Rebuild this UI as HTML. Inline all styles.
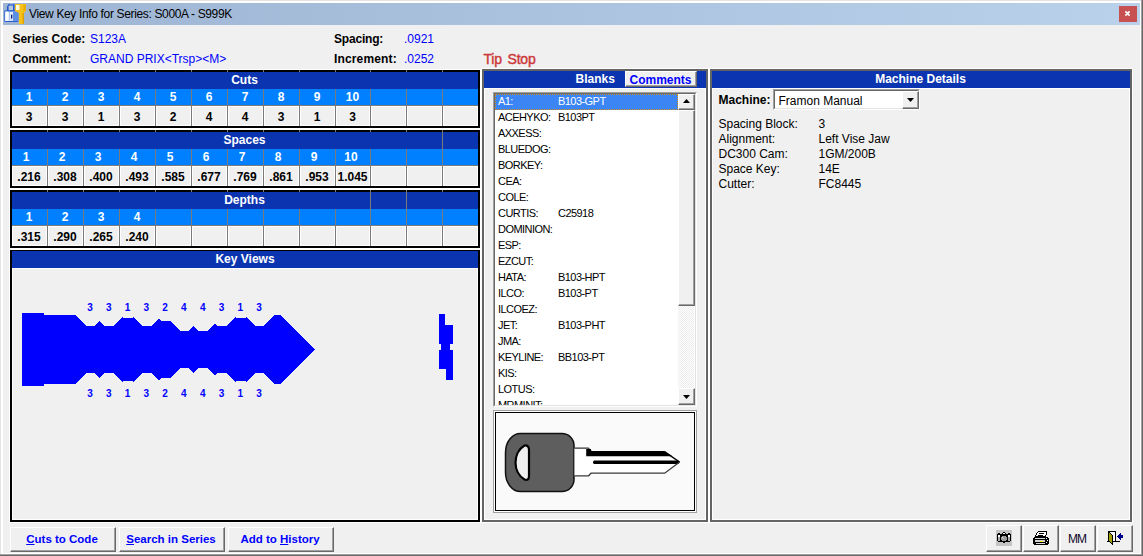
<!DOCTYPE html>
<html><head><meta charset="utf-8">
<style>
*{margin:0;padding:0;box-sizing:border-box}
html,body{width:1143px;height:556px;overflow:hidden;background:#f0f0f0;font-family:"Liberation Sans",sans-serif}
.a{position:absolute}
.t{position:absolute;line-height:1;white-space:nowrap}
.b{font-weight:bold}
.grid{position:absolute;left:10px;width:470px;height:58px;border:2px solid #000;box-shadow:0 0 0 1px #fff;background:#f0f0f0}
.vl{position:absolute;top:-2px;width:1px;height:56px;background:#7a7a7a}
.hd{position:absolute;left:0;top:0;width:466px;height:17px;background:#0b35b0}
.hr{position:absolute;left:0;top:17px;width:466px;height:16px;background:#0080ff}
.hl{position:absolute;left:0;top:33px;width:466px;height:1px;background:#7a7a7a}
.cw{position:absolute;height:20px;top:34px;box-shadow:inset 0 0 0 1px #fff}
.c{position:absolute;width:35px;text-align:center;font-weight:bold;font-size:12px;line-height:1;white-space:nowrap}
.panel{position:absolute;border:2px solid #646464}
.btn{position:absolute;background:#f0f0f0;border-top:1px solid #fff;border-left:1px solid #fff;border-right:1px solid #696969;border-bottom:1px solid #696969;box-shadow:inset -1px -1px 0 #a0a0a0}
</style></head><body>
<div class="a" style="left:0;top:0;width:1143px;height:1px;background:#e3e3e3"></div>
<div class="a" style="left:0;top:0;width:1px;height:556px;background:#e3e3e3"></div>
<div class="a" style="left:1px;top:1px;width:1140px;height:2px;background:#fff"></div>
<div class="a" style="left:1px;top:1px;width:2px;height:553px;background:#fff"></div>
<div class="a" style="left:1140px;top:1px;width:1px;height:553px;background:#fff"></div>
<div class="a" style="left:1px;top:553px;width:1140px;height:1px;background:#fff"></div>
<div class="a" style="left:1141px;top:0;width:1px;height:555px;background:#a0a0a0"></div>
<div class="a" style="left:0;top:554px;width:1142px;height:1px;background:#a0a0a0"></div>
<div class="a" style="left:1142px;top:0;width:1px;height:556px;background:#696969"></div>
<div class="a" style="left:0;top:555px;width:1143px;height:1px;background:#696969"></div>
<div class="a" style="left:3px;top:3px;width:1137px;height:22px;background:linear-gradient(to right,#9db5d3,#b9d1ea)"></div>
<div class="t" style="left:29px;top:7.84px;font-size:12px;color:#000;letter-spacing:-0.35px">View Key Info for Series: S000A - S999K</div>
<div class="a" style="left:1119px;top:6px;width:18px;height:16px;background:#c75050"></div>
<svg class="a" style="left:1119px;top:6px" width="18" height="16" viewBox="0 0 18 16"><path d="M6.4,5.4 L10.6,9.6 M10.6,5.4 L6.4,9.6" stroke="#fff" stroke-width="1.7" stroke-linecap="butt"/></svg>
<div class="t b" style="left:12.5px;top:32.84px;font-size:12px;color:#000;letter-spacing:-0.05px">Series Code:</div>
<div class="t" style="left:90px;top:32.84px;font-size:12px;color:#0000ff;">S123A</div>
<div class="t b" style="left:12.5px;top:52.84px;font-size:12px;color:#000;letter-spacing:-0.1px">Comment:</div>
<div class="t" style="left:90px;top:52.84px;font-size:12px;color:#0000ff;">GRAND PRIX&lt;Trsp&gt;&lt;M&gt;</div>
<div class="t b" style="left:334px;top:32.84px;font-size:12px;color:#000;letter-spacing:-0.2px">Spacing:</div>
<div class="t" style="left:404px;top:32.84px;font-size:12px;color:#0000ff;">.0921</div>
<div class="t b" style="left:334px;top:52.84px;font-size:12px;color:#000;letter-spacing:0.15px">Increment:</div>
<div class="t" style="left:404px;top:52.84px;font-size:12px;color:#0000ff;">.0252</div>
<div class="t" style="left:483.5px;top:52.15px;font-size:14px;color:#cc3838;-webkit-text-stroke:0.4px #cc3838;word-spacing:2px;letter-spacing:-0.2px">Tip Stop</div>
<div class="grid" style="top:70px">
<div class="hd"></div><div class="hr"></div><div class="hl"></div>
<div class="cw" style="left:0px;width:35px"></div>
<div class="cw" style="left:36px;width:35px"></div>
<div class="cw" style="left:72px;width:35px"></div>
<div class="cw" style="left:108px;width:35px"></div>
<div class="cw" style="left:144px;width:35px"></div>
<div class="cw" style="left:180px;width:35px"></div>
<div class="cw" style="left:216px;width:35px"></div>
<div class="cw" style="left:252px;width:35px"></div>
<div class="cw" style="left:288px;width:35px"></div>
<div class="cw" style="left:324px;width:34px"></div>
<div class="cw" style="left:359px;width:35px"></div>
<div class="cw" style="left:395px;width:35px"></div>
<div class="cw" style="left:431px;width:35px"></div>
<div class="vl" style="left:35px;top:17px;height:37px"></div>
<div class="vl" style="left:35px;top:-2px;height:2px"></div>
<div class="vl" style="left:71px;top:17px;height:37px"></div>
<div class="vl" style="left:71px;top:-2px;height:2px"></div>
<div class="vl" style="left:107px;top:17px;height:37px"></div>
<div class="vl" style="left:107px;top:-2px;height:2px"></div>
<div class="vl" style="left:143px;top:17px;height:37px"></div>
<div class="vl" style="left:143px;top:-2px;height:2px"></div>
<div class="vl" style="left:179px;top:17px;height:37px"></div>
<div class="vl" style="left:179px;top:-2px;height:2px"></div>
<div class="vl" style="left:215px;top:17px;height:37px"></div>
<div class="vl" style="left:215px;top:-2px;height:2px"></div>
<div class="vl" style="left:251px;top:17px;height:37px"></div>
<div class="vl" style="left:251px;top:-2px;height:2px"></div>
<div class="vl" style="left:287px;top:17px;height:37px"></div>
<div class="vl" style="left:287px;top:-2px;height:2px"></div>
<div class="vl" style="left:323px;top:17px;height:37px"></div>
<div class="vl" style="left:323px;top:-2px;height:2px"></div>
<div class="vl" style="left:358px;top:17px;height:37px"></div>
<div class="vl" style="left:358px;top:-2px;height:2px"></div>
<div class="vl" style="left:394px;top:17px;height:37px"></div>
<div class="vl" style="left:394px;top:-2px;height:2px"></div>
<div class="vl" style="left:430px;top:17px;height:37px"></div>
<div class="vl" style="left:430px;top:-2px;height:2px"></div>
<div class="t b" style="left:-0.5px;width:466px;text-align:center;top:2.34px;font-size:12px;color:#fff">Cuts</div>
<div class="c" style="left:-0.5px;width:35px;top:19.34px;color:#fff">1</div>
<div class="c" style="left:35.5px;width:35px;top:19.34px;color:#fff">2</div>
<div class="c" style="left:71.5px;width:35px;top:19.34px;color:#fff">3</div>
<div class="c" style="left:107.5px;width:35px;top:19.34px;color:#fff">4</div>
<div class="c" style="left:143.5px;width:35px;top:19.34px;color:#fff">5</div>
<div class="c" style="left:179.5px;width:35px;top:19.34px;color:#fff">6</div>
<div class="c" style="left:215.5px;width:35px;top:19.34px;color:#fff">7</div>
<div class="c" style="left:251.5px;width:35px;top:19.34px;color:#fff">8</div>
<div class="c" style="left:287.5px;width:35px;top:19.34px;color:#fff">9</div>
<div class="c" style="left:323.5px;width:34px;top:19.34px;color:#fff">10</div>
<div class="c" style="left:-0.5px;width:35px;top:38.54px;color:#000">3</div>
<div class="c" style="left:35.5px;width:35px;top:38.54px;color:#000">3</div>
<div class="c" style="left:71.5px;width:35px;top:38.54px;color:#000">1</div>
<div class="c" style="left:107.5px;width:35px;top:38.54px;color:#000">3</div>
<div class="c" style="left:143.5px;width:35px;top:38.54px;color:#000">2</div>
<div class="c" style="left:179.5px;width:35px;top:38.54px;color:#000">4</div>
<div class="c" style="left:215.5px;width:35px;top:38.54px;color:#000">4</div>
<div class="c" style="left:251.5px;width:35px;top:38.54px;color:#000">3</div>
<div class="c" style="left:287.5px;width:35px;top:38.54px;color:#000">1</div>
<div class="c" style="left:323.5px;width:34px;top:38.54px;color:#000">3</div>
</div>
<div class="grid" style="top:130px">
<div class="hd"></div><div class="hr"></div><div class="hl"></div>
<div class="cw" style="left:0px;width:35px"></div>
<div class="cw" style="left:36px;width:35px"></div>
<div class="cw" style="left:72px;width:35px"></div>
<div class="cw" style="left:108px;width:35px"></div>
<div class="cw" style="left:144px;width:35px"></div>
<div class="cw" style="left:180px;width:35px"></div>
<div class="cw" style="left:216px;width:35px"></div>
<div class="cw" style="left:252px;width:35px"></div>
<div class="cw" style="left:288px;width:35px"></div>
<div class="cw" style="left:324px;width:34px"></div>
<div class="cw" style="left:359px;width:35px"></div>
<div class="cw" style="left:395px;width:35px"></div>
<div class="cw" style="left:431px;width:35px"></div>
<div class="vl" style="left:35px;top:17px;height:37px"></div>
<div class="vl" style="left:35px;top:-2px;height:2px"></div>
<div class="vl" style="left:71px;top:17px;height:37px"></div>
<div class="vl" style="left:71px;top:-2px;height:2px"></div>
<div class="vl" style="left:107px;top:17px;height:37px"></div>
<div class="vl" style="left:107px;top:-2px;height:2px"></div>
<div class="vl" style="left:143px;top:17px;height:37px"></div>
<div class="vl" style="left:143px;top:-2px;height:2px"></div>
<div class="vl" style="left:179px;top:17px;height:37px"></div>
<div class="vl" style="left:179px;top:-2px;height:2px"></div>
<div class="vl" style="left:215px;top:17px;height:37px"></div>
<div class="vl" style="left:215px;top:-2px;height:2px"></div>
<div class="vl" style="left:251px;top:17px;height:37px"></div>
<div class="vl" style="left:251px;top:-2px;height:2px"></div>
<div class="vl" style="left:287px;top:17px;height:37px"></div>
<div class="vl" style="left:287px;top:-2px;height:2px"></div>
<div class="vl" style="left:323px;top:17px;height:37px"></div>
<div class="vl" style="left:323px;top:-2px;height:2px"></div>
<div class="vl" style="left:358px;top:17px;height:37px"></div>
<div class="vl" style="left:358px;top:-2px;height:2px"></div>
<div class="vl" style="left:394px;top:17px;height:37px"></div>
<div class="vl" style="left:394px;top:-2px;height:2px"></div>
<div class="vl" style="left:430px;top:17px;height:37px"></div>
<div class="vl" style="left:430px;top:-2px;height:19px"></div>
<div class="t b" style="left:-0.5px;width:466px;text-align:center;top:2.34px;font-size:12px;color:#fff">Spaces</div>
<div class="c" style="left:-3.5px;width:35px;top:19.34px;color:#fff">1</div>
<div class="c" style="left:32.5px;width:35px;top:19.34px;color:#fff">2</div>
<div class="c" style="left:68.5px;width:35px;top:19.34px;color:#fff">3</div>
<div class="c" style="left:104.5px;width:35px;top:19.34px;color:#fff">4</div>
<div class="c" style="left:140.5px;width:35px;top:19.34px;color:#fff">5</div>
<div class="c" style="left:176.5px;width:35px;top:19.34px;color:#fff">6</div>
<div class="c" style="left:212.5px;width:35px;top:19.34px;color:#fff">7</div>
<div class="c" style="left:248.5px;width:35px;top:19.34px;color:#fff">8</div>
<div class="c" style="left:284.5px;width:35px;top:19.34px;color:#fff">9</div>
<div class="c" style="left:322.0px;width:34px;top:19.34px;color:#fff">10</div>
<div class="c" style="left:-0.5px;width:35px;top:38.54px;color:#000">.216</div>
<div class="c" style="left:35.5px;width:35px;top:38.54px;color:#000">.308</div>
<div class="c" style="left:71.5px;width:35px;top:38.54px;color:#000">.400</div>
<div class="c" style="left:107.5px;width:35px;top:38.54px;color:#000">.493</div>
<div class="c" style="left:143.5px;width:35px;top:38.54px;color:#000">.585</div>
<div class="c" style="left:179.5px;width:35px;top:38.54px;color:#000">.677</div>
<div class="c" style="left:215.5px;width:35px;top:38.54px;color:#000">.769</div>
<div class="c" style="left:251.5px;width:35px;top:38.54px;color:#000">.861</div>
<div class="c" style="left:287.5px;width:35px;top:38.54px;color:#000">.953</div>
<div class="c" style="left:323.5px;width:34px;top:38.54px;color:#000">1.045</div>
</div>
<div class="grid" style="top:190px">
<div class="hd"></div><div class="hr"></div><div class="hl"></div>
<div class="cw" style="left:0px;width:35px"></div>
<div class="cw" style="left:36px;width:35px"></div>
<div class="cw" style="left:72px;width:35px"></div>
<div class="cw" style="left:108px;width:35px"></div>
<div class="cw" style="left:144px;width:35px"></div>
<div class="cw" style="left:180px;width:35px"></div>
<div class="cw" style="left:216px;width:35px"></div>
<div class="cw" style="left:252px;width:35px"></div>
<div class="cw" style="left:288px;width:35px"></div>
<div class="cw" style="left:324px;width:34px"></div>
<div class="cw" style="left:359px;width:35px"></div>
<div class="cw" style="left:395px;width:35px"></div>
<div class="cw" style="left:431px;width:35px"></div>
<div class="vl" style="left:35px;top:17px;height:37px"></div>
<div class="vl" style="left:35px;top:-2px;height:2px"></div>
<div class="vl" style="left:71px;top:17px;height:37px"></div>
<div class="vl" style="left:71px;top:-2px;height:2px"></div>
<div class="vl" style="left:107px;top:17px;height:37px"></div>
<div class="vl" style="left:107px;top:-2px;height:2px"></div>
<div class="vl" style="left:143px;top:17px;height:37px"></div>
<div class="vl" style="left:143px;top:-2px;height:2px"></div>
<div class="vl" style="left:179px;top:17px;height:37px"></div>
<div class="vl" style="left:179px;top:-2px;height:2px"></div>
<div class="vl" style="left:215px;top:17px;height:37px"></div>
<div class="vl" style="left:215px;top:-2px;height:2px"></div>
<div class="vl" style="left:251px;top:17px;height:37px"></div>
<div class="vl" style="left:251px;top:-2px;height:2px"></div>
<div class="vl" style="left:287px;top:17px;height:37px"></div>
<div class="vl" style="left:287px;top:-2px;height:2px"></div>
<div class="vl" style="left:323px;top:17px;height:37px"></div>
<div class="vl" style="left:323px;top:-2px;height:2px"></div>
<div class="vl" style="left:358px;top:17px;height:37px"></div>
<div class="vl" style="left:358px;top:-2px;height:19px"></div>
<div class="vl" style="left:394px;top:17px;height:37px"></div>
<div class="vl" style="left:394px;top:-2px;height:19px"></div>
<div class="vl" style="left:430px;top:17px;height:37px"></div>
<div class="vl" style="left:430px;top:-2px;height:2px"></div>
<div class="t b" style="left:-0.5px;width:466px;text-align:center;top:2.34px;font-size:12px;color:#fff">Depths</div>
<div class="c" style="left:-0.5px;width:35px;top:19.34px;color:#fff">1</div>
<div class="c" style="left:35.5px;width:35px;top:19.34px;color:#fff">2</div>
<div class="c" style="left:71.5px;width:35px;top:19.34px;color:#fff">3</div>
<div class="c" style="left:107.5px;width:35px;top:19.34px;color:#fff">4</div>
<div class="c" style="left:-0.5px;width:35px;top:38.54px;color:#000">.315</div>
<div class="c" style="left:35.5px;width:35px;top:38.54px;color:#000">.290</div>
<div class="c" style="left:71.5px;width:35px;top:38.54px;color:#000">.265</div>
<div class="c" style="left:107.5px;width:35px;top:38.54px;color:#000">.240</div>
</div>
<div class="a" style="left:9px;top:249px;width:472px;height:274px;background:#fff"></div>
<div class="a" style="left:10px;top:250px;width:470px;height:272px;border:2px solid #000;border-top-width:1px;background:#f0f0f0"></div>
<div class="a" style="left:12px;top:251px;width:466px;height:17px;background:#0b35b0"></div>
<div class="a" style="left:12px;top:268px;width:466px;height:252px;box-shadow:inset 1px 1px 0 #fff,inset -1px -1px 0 #fff"></div>
<div class="t b" style="left:45.0px;width:400px;text-align:center;top:252.84px;font-size:12px;color:#fff;">Key Views</div>
<svg class="a" style="left:0;top:0" width="1143" height="556" viewBox="0 0 1143 556"><polygon points="22.00,313.00 44.00,313.00 44.00,315.00 74.00,315.00 74.00,315.00 75.10,315.00 86.10,326.00 94.90,326.00 99.85,321.05 99.90,321.02 104.85,325.97 104.90,326.00 113.65,326.00 113.70,325.98 122.65,317.03 122.70,317.04 123.65,317.99 123.70,318.00 132.45,318.00 132.50,317.96 133.45,317.01 142.40,325.96 142.45,326.00 151.20,326.00 151.25,325.99 158.70,318.54 158.75,318.53 161.20,320.98 161.25,321.00 170.00,321.00 180.00,331.00 188.80,331.00 193.75,326.05 193.80,326.02 198.75,330.97 198.80,331.00 207.55,331.00 207.60,330.98 215.05,323.53 215.10,323.54 217.55,325.99 217.60,326.00 226.35,326.00 226.40,325.96 235.35,317.01 236.30,317.96 236.35,318.00 245.10,318.00 245.15,317.99 246.10,317.04 246.15,317.03 255.10,325.98 255.15,326.00 263.90,326.00 263.95,325.97 274.90,315.02 274.95,315.00 280.00,315.00 314.50,349.50 280.00,384.00 274.95,384.00 274.90,383.98 263.95,373.03 263.90,373.00 255.15,373.00 255.10,373.02 246.15,381.97 246.10,381.96 245.15,381.01 245.10,381.00 236.35,381.00 236.30,381.04 235.35,381.99 226.40,373.04 226.35,373.00 217.60,373.00 217.55,373.01 215.10,375.46 215.05,375.47 207.60,368.02 207.55,368.00 198.80,368.00 198.75,368.03 193.80,372.98 193.75,372.95 188.80,368.00 180.00,368.00 170.00,378.00 161.25,378.00 161.20,378.02 158.75,380.47 158.70,380.46 151.25,373.01 151.20,373.00 142.45,373.00 142.40,373.04 133.45,381.99 132.50,381.04 132.45,381.00 123.70,381.00 123.65,381.01 122.70,381.96 122.65,381.97 113.70,373.02 113.65,373.00 104.90,373.00 104.85,373.03 99.90,377.98 99.85,377.95 94.90,373.00 86.10,373.00 75.10,384.00 74.00,384.00 74.00,384.00 44.00,384.00 44.00,386.00 22.00,386.00" fill="#0000ff" shape-rendering="crispEdges"/><polygon points="439,314 445,314 445,325 453,325 453,344 450,344 450,350 453,350 453,380 446,380 446,369 439,369 439,350 441,350 441,344 439,344" fill="#0000ff" shape-rendering="crispEdges"/></svg>
<div class="t b" style="left:80.0px;width:20px;text-align:center;top:302.54px;font-size:10px;color:#0000ff;">3</div>
<div class="t b" style="left:80.0px;width:20px;text-align:center;top:388.54px;font-size:10px;color:#0000ff;">3</div>
<div class="t b" style="left:98.78px;width:20px;text-align:center;top:302.54px;font-size:10px;color:#0000ff;">3</div>
<div class="t b" style="left:98.78px;width:20px;text-align:center;top:388.54px;font-size:10px;color:#0000ff;">3</div>
<div class="t b" style="left:117.56px;width:20px;text-align:center;top:302.54px;font-size:10px;color:#0000ff;">1</div>
<div class="t b" style="left:117.56px;width:20px;text-align:center;top:388.54px;font-size:10px;color:#0000ff;">1</div>
<div class="t b" style="left:136.34px;width:20px;text-align:center;top:302.54px;font-size:10px;color:#0000ff;">3</div>
<div class="t b" style="left:136.34px;width:20px;text-align:center;top:388.54px;font-size:10px;color:#0000ff;">3</div>
<div class="t b" style="left:155.12px;width:20px;text-align:center;top:302.54px;font-size:10px;color:#0000ff;">2</div>
<div class="t b" style="left:155.12px;width:20px;text-align:center;top:388.54px;font-size:10px;color:#0000ff;">2</div>
<div class="t b" style="left:173.9px;width:20px;text-align:center;top:302.54px;font-size:10px;color:#0000ff;">4</div>
<div class="t b" style="left:173.9px;width:20px;text-align:center;top:388.54px;font-size:10px;color:#0000ff;">4</div>
<div class="t b" style="left:192.68px;width:20px;text-align:center;top:302.54px;font-size:10px;color:#0000ff;">4</div>
<div class="t b" style="left:192.68px;width:20px;text-align:center;top:388.54px;font-size:10px;color:#0000ff;">4</div>
<div class="t b" style="left:211.46px;width:20px;text-align:center;top:302.54px;font-size:10px;color:#0000ff;">3</div>
<div class="t b" style="left:211.46px;width:20px;text-align:center;top:388.54px;font-size:10px;color:#0000ff;">3</div>
<div class="t b" style="left:230.24px;width:20px;text-align:center;top:302.54px;font-size:10px;color:#0000ff;">1</div>
<div class="t b" style="left:230.24px;width:20px;text-align:center;top:388.54px;font-size:10px;color:#0000ff;">1</div>
<div class="t b" style="left:249.01999999999998px;width:20px;text-align:center;top:302.54px;font-size:10px;color:#0000ff;">3</div>
<div class="t b" style="left:249.01999999999998px;width:20px;text-align:center;top:388.54px;font-size:10px;color:#0000ff;">3</div>
<div class="a" style="left:481px;top:68px;width:228px;height:455px;border:1px solid #fff"></div>
<div class="panel" style="left:482px;top:69px;width:226px;height:453px"></div>
<div class="a" style="left:484px;top:71px;width:222px;height:17px;background:#0b35b0"></div>
<div class="a" style="left:484px;top:88px;width:222px;height:432px;box-shadow:inset 1px 1px 0 #fff,inset -1px -1px 0 #fff"></div>
<div class="t b" style="left:575.5px;top:72.84px;font-size:12px;color:#fff;">Blanks</div>
<div class="btn" style="left:625px;top:71px;width:72px;height:16px"></div>
<div class="t b" style="left:629.5px;top:73.84px;font-size:12px;color:#0000ff;">Comments</div>
<div class="a" style="left:493px;top:92px;width:204px;height:315px;border-top:1px solid #a0a0a0;border-left:1px solid #a0a0a0;border-right:1px solid #fff;border-bottom:1px solid #fff"></div>
<div class="a" style="left:494px;top:93px;width:202px;height:313px;border-top:1px solid #696969;border-left:1px solid #696969;border-right:1px solid #e3e3e3;border-bottom:1px solid #e3e3e3;background:#fff;overflow:hidden"></div>
<div class="a" style="left:495px;top:94px;width:183px;height:16px;background:#3b85f5;outline:1px dotted #d08a10;outline-offset:-1px"></div>
<div class="a" style="left:495px;top:94px;width:183px;height:311px;overflow:hidden">
<div class="t" style="left:3px;top:1.69px;font-size:11px;letter-spacing:-0.55px;color:#fff">A1:</div>
<div class="t" style="left:63px;top:1.69px;font-size:11px;letter-spacing:-0.55px;color:#fff">B103-GPT</div>
<div class="t" style="left:3px;top:17.69px;font-size:11px;letter-spacing:-0.55px;color:#000">ACEHYKO:</div>
<div class="t" style="left:63px;top:17.69px;font-size:11px;letter-spacing:-0.55px;color:#000">B103PT</div>
<div class="t" style="left:3px;top:33.69px;font-size:11px;letter-spacing:-0.55px;color:#000">AXXESS:</div>
<div class="t" style="left:3px;top:49.69px;font-size:11px;letter-spacing:-0.55px;color:#000">BLUEDOG:</div>
<div class="t" style="left:3px;top:65.69px;font-size:11px;letter-spacing:-0.55px;color:#000">BORKEY:</div>
<div class="t" style="left:3px;top:81.69px;font-size:11px;letter-spacing:-0.55px;color:#000">CEA:</div>
<div class="t" style="left:3px;top:97.69px;font-size:11px;letter-spacing:-0.55px;color:#000">COLE:</div>
<div class="t" style="left:3px;top:113.69px;font-size:11px;letter-spacing:-0.55px;color:#000">CURTIS:</div>
<div class="t" style="left:63px;top:113.69px;font-size:11px;letter-spacing:-0.55px;color:#000">C25918</div>
<div class="t" style="left:3px;top:129.69px;font-size:11px;letter-spacing:-0.55px;color:#000">DOMINION:</div>
<div class="t" style="left:3px;top:145.69px;font-size:11px;letter-spacing:-0.55px;color:#000">ESP:</div>
<div class="t" style="left:3px;top:161.69px;font-size:11px;letter-spacing:-0.55px;color:#000">EZCUT:</div>
<div class="t" style="left:3px;top:177.69px;font-size:11px;letter-spacing:-0.55px;color:#000">HATA:</div>
<div class="t" style="left:63px;top:177.69px;font-size:11px;letter-spacing:-0.55px;color:#000">B103-HPT</div>
<div class="t" style="left:3px;top:193.69px;font-size:11px;letter-spacing:-0.55px;color:#000">ILCO:</div>
<div class="t" style="left:63px;top:193.69px;font-size:11px;letter-spacing:-0.55px;color:#000">B103-PT</div>
<div class="t" style="left:3px;top:209.69px;font-size:11px;letter-spacing:-0.55px;color:#000">ILCOEZ:</div>
<div class="t" style="left:3px;top:225.69px;font-size:11px;letter-spacing:-0.55px;color:#000">JET:</div>
<div class="t" style="left:63px;top:225.69px;font-size:11px;letter-spacing:-0.55px;color:#000">B103-PHT</div>
<div class="t" style="left:3px;top:241.69px;font-size:11px;letter-spacing:-0.55px;color:#000">JMA:</div>
<div class="t" style="left:3px;top:257.69px;font-size:11px;letter-spacing:-0.55px;color:#000">KEYLINE:</div>
<div class="t" style="left:63px;top:257.69px;font-size:11px;letter-spacing:-0.55px;color:#000">BB103-PT</div>
<div class="t" style="left:3px;top:273.69px;font-size:11px;letter-spacing:-0.55px;color:#000">KIS:</div>
<div class="t" style="left:3px;top:289.69px;font-size:11px;letter-spacing:-0.55px;color:#000">LOTUS:</div>
<div class="t" style="left:3px;top:305.69px;font-size:11px;letter-spacing:-0.55px;color:#000">MRMINIT:</div>
</div>
<div class="a" style="left:678px;top:110px;width:16px;height:278px;background-color:#f7f7f7;background-image:repeating-conic-gradient(#fff 0 25%,#ececec 0 50%);background-size:2px 2px"></div>
<div class="btn" style="left:678px;top:94px;width:17px;height:16px"></div>
<svg class="a" style="left:683px;top:99px" width="7" height="4"><polygon points="0,4 3.5,0 7,4" fill="#000"/></svg>
<div class="btn" style="left:678px;top:110px;width:17px;height:196px"></div>
<div class="btn" style="left:678px;top:388px;width:17px;height:17px"></div>
<svg class="a" style="left:683px;top:395px" width="7" height="4"><polygon points="0,0 7,0 3.5,4" fill="#000"/></svg>
<div class="a" style="left:493px;top:410px;width:204px;height:103px;border:1px solid #a0a0a0;background:#fff"></div>
<div class="a" style="left:495px;top:412px;width:200px;height:99px;border:1px solid #000;background:#fafafa"></div>
<svg class="a" style="left:0;top:0" width="1143" height="556" viewBox="0 0 1143 556">
<path d="M520.5,433.5 L562,433.5 A12,12 0 0 1 574,445.5 L574,479.5 A12,12 0 0 1 562,491.5 L520.5,491.5 A15,19 0 0 1 505.5,472.5 L505.5,452.5 A15,19 0 0 1 520.5,433.5 Z" fill="#5e5e5e" stroke="#111" stroke-width="1.5"/>
<path d="M524.5,445.5 Q529,445 529,450 L529,476 Q529,481 524.5,479.5 C518.5,476 515.5,469 515.5,462.5 C515.5,456 518.5,449 524.5,445.5 Z" fill="#eeeeee" stroke="#000" stroke-width="2.2"/>
<polygon points="574.5,448.2 588.3,448.2 591.5,451.4 664.3,451.4 679.6,462 664.7,473.2 591,473.2 588.6,475.8 574.5,475.8" fill="#fff"/>
<polyline points="574.5,448.2 588.3,448.2 591.5,451.4" fill="none" stroke="#333" stroke-width="1.2"/>
<polygon points="586.2,449 591,449 591,451 664.3,451 672.5,456.3 586.2,456.3" fill="#000"/>
<line x1="664.3" y1="451.6" x2="679.6" y2="462" stroke="#000" stroke-width="1.5"/>
<path d="M594,460.4 L678,460.4 Q680.8,462.2 678,464.1 L594,464.1 Q591.8,462.2 594,460.4 Z" fill="#000"/>
<polyline points="574.5,475.8 588.6,475.8 591,473.2 664.7,473.2 679.6,462" fill="none" stroke="#3a3a3a" stroke-width="1.3"/>
</svg>
<div class="a" style="left:709px;top:68px;width:424px;height:455px;border:1px solid #fff"></div>
<div class="panel" style="left:710px;top:69px;width:422px;height:453px"></div>
<div class="a" style="left:712px;top:71px;width:418px;height:17px;background:#0b35b0"></div>
<div class="a" style="left:712px;top:88px;width:418px;height:432px;box-shadow:inset 1px 1px 0 #fff,inset -1px -1px 0 #fff"></div>
<div class="t b" style="left:720.5px;width:400px;text-align:center;top:72.84px;font-size:12px;color:#fff;">Machine Details</div>
<div class="t b" style="left:718.5px;top:93.84px;font-size:12px;color:#000;">Machine:</div>
<div class="a" style="left:773px;top:89px;width:147px;height:21px;border-top:1px solid #a0a0a0;border-left:1px solid #a0a0a0;border-right:1px solid #fff;border-bottom:1px solid #fff"></div>
<div class="a" style="left:774px;top:90px;width:145px;height:19px;border-top:1px solid #696969;border-left:1px solid #696969;border-right:1px solid #e3e3e3;border-bottom:1px solid #e3e3e3;background:#fff"></div>
<div class="t" style="left:778.5px;top:94.84px;font-size:12px;color:#000;">Framon Manual</div>
<div class="btn" style="left:902px;top:91px;width:17px;height:18px"></div>
<svg class="a" style="left:907px;top:98px" width="7" height="4"><polygon points="0,0 7,0 3.5,4" fill="#000"/></svg>
<div class="t" style="left:718.5px;top:117.84px;font-size:12px;color:#000;">Spacing Block:</div>
<div class="t" style="left:818.5px;top:117.84px;font-size:12px;color:#000;">3</div>
<div class="t" style="left:718.5px;top:132.84px;font-size:12px;color:#000;">Alignment:</div>
<div class="t" style="left:818.5px;top:132.84px;font-size:12px;color:#000;">Left Vise Jaw</div>
<div class="t" style="left:718.5px;top:147.84px;font-size:12px;color:#000;">DC300 Cam:</div>
<div class="t" style="left:818.5px;top:147.84px;font-size:12px;color:#000;">1GM/200B</div>
<div class="t" style="left:718.5px;top:162.84px;font-size:12px;color:#000;">Space Key:</div>
<div class="t" style="left:818.5px;top:162.84px;font-size:12px;color:#000;">14E</div>
<div class="t" style="left:718.5px;top:177.84px;font-size:12px;color:#000;">Cutter:</div>
<div class="t" style="left:818.5px;top:177.84px;font-size:12px;color:#000;">FC8445</div>
<div class="btn" style="left:10px;top:527px;width:106px;height:25px"></div>
<div class="t b" style="left:2.0px;width:120px;text-align:center;top:534.27px;font-size:11.5px;color:#0000ff;"><u>C</u>uts to Code</div>
<div class="btn" style="left:119px;top:527px;width:106px;height:25px"></div>
<div class="t b" style="left:111.0px;width:120px;text-align:center;top:534.27px;font-size:11.5px;color:#0000ff;"><u>S</u>earch in Series</div>
<div class="btn" style="left:228px;top:527px;width:106px;height:25px"></div>
<div class="t b" style="left:220.0px;width:120px;text-align:center;top:534.27px;font-size:11.5px;color:#0000ff;">Add to <u>H</u>istory</div>
<div class="btn" style="left:986px;top:525px;width:36px;height:27px"></div>
<div class="btn" style="left:1023px;top:525px;width:36px;height:27px"></div>
<div class="btn" style="left:1060px;top:525px;width:36px;height:27px"></div>
<div class="btn" style="left:1097px;top:525px;width:36px;height:27px"></div>
<svg class="a" style="left:996px;top:530px" width="16" height="16" viewBox="0 0 16 16" shape-rendering="crispEdges">
<rect x="0" y="0" width="16" height="16" fill="#c4c4c4"/>
<rect x="7" y="2" width="2" height="1" fill="#000"/>
<rect x="6" y="3" width="4" height="1" fill="#000"/><rect x="7" y="3" width="2" height="1" fill="#fff"/>
<rect x="2" y="3" width="2" height="1" fill="#000"/><rect x="12" y="3" width="2" height="1" fill="#000"/>
<rect x="1" y="4" width="14" height="7" fill="#000"/>
<rect x="2" y="11" width="12" height="1" fill="#000"/>
<rect x="7" y="12" width="2" height="1" fill="#000"/>
<rect x="2" y="5" width="2" height="2" fill="#fff"/><rect x="2" y="7" width="2" height="4" fill="#a8a8a8"/>
<rect x="12" y="5" width="2" height="2" fill="#fff"/><rect x="12" y="7" width="2" height="4" fill="#a8a8a8"/>
<rect x="6" y="6" width="4" height="5" fill="#9a9a9a"/><rect x="5" y="7" width="6" height="3" fill="#9a9a9a"/>
<rect x="6" y="7" width="1" height="1" fill="#e0e0e0"/><rect x="7" y="8" width="1" height="1" fill="#c0c0c0"/>
</svg>
<svg class="a" style="left:0;top:0" width="1143" height="556" viewBox="0 0 1143 556" shape-rendering="crispEdges">
<path d="M1038,531 h9 v4 h-1 v2 h-11 v-2 h1 v-2 h1 v-1 h1 z" fill="#000"/>
<path d="M1039,532 h7 v3 h-1 v1 h-9 v-1 h1 v-2 h1 v-1 z" fill="#fff"/>
<rect x="1039" y="533" width="5" height="1" fill="#000"/><rect x="1038" y="535" width="5" height="1" fill="#000"/>
<path d="M1034,537 h14 v1 h1 v6 h-1 v1 h-14 v-1 h-1 v-6 h1 z" fill="#000"/>
<rect x="1035" y="538" width="10" height="1" fill="#d8d8d8"/>
<rect x="1035" y="540" width="10" height="2" fill="#d0d0d0"/>
<rect x="1040" y="541" width="3" height="1" fill="#ffff00"/>
<rect x="1036" y="543" width="9" height="1" fill="#d8d8d8"/>
<rect x="1046" y="538" width="1" height="1" fill="#fff"/><rect x="1047" y="540" width="1" height="1" fill="#fff"/><rect x="1046" y="542" width="1" height="1" fill="#fff"/>
</svg>
<div class="t" style="left:1068px;top:532.84px;font-size:12px;color:#0c0828;letter-spacing:-1px">MM</div>
<svg class="a" style="left:0;top:0" width="1143" height="556" viewBox="0 0 1143 556" shape-rendering="crispEdges">
<path d="M1108,531 h8 v10 h4 v1 h-13 v-1 h1 z" fill="#000"/>
<rect x="1109" y="532" width="6" height="9" fill="#fff"/>
<path d="M1109,532 h1 v1 h1 v1 h1 v1 h1 v10 h-1 v-1 h-1 v-1 h-1 v-1 h-1 v-1 h-1 z" fill="#000"/>
<path d="M1109,533 h1 v1 h1 v1 h1 v8 h-1 v-1 h-1 v-1 h-1 z" fill="#a0a000"/>
<path d="M1120,533 h1 v2 h2 v3 h-2 v2 h-1 v-1 h-1 v-1 h-1 v-1 h-1 v-1 h1 v-1 h1 z" fill="#00008c"/>
</svg>
<svg class="a" style="left:0;top:0" width="40" height="30" viewBox="0 0 40 30">
<path d="M7,11 V6.5 L8.5,4 H14.5 V11 Z" fill="#2458c8"/>
<rect x="8.6" y="5.6" width="4.4" height="5" fill="#b9c9dd"/>
<rect x="9.5" y="4.2" width="4" height="1" fill="#6d95e0"/>
<rect x="4.3" y="10.3" width="14" height="11.6" rx="1.2" fill="#2a5fd0"/>
<rect x="5.3" y="11.6" width="12" height="9.3" fill="#dfeafc"/>
<rect x="5.3" y="11.6" width="3" height="9.3" fill="#ffffff"/>
<rect x="13" y="11.6" width="4.3" height="9.3" fill="#5d8ee6"/>
<rect x="9" y="12" width="1" height="8" fill="#a9c4f2"/>
<rect x="11" y="14.6" width="1.3" height="4" fill="#0a1a78"/>
<path d="M15,4 H26 V11 L24,13 V24 H19 V13 L15,11 Z" fill="#f6c21a"/>
<path d="M16,5 H19.5 V10 H16 Z" fill="#fffbe0"/>
<rect x="23.5" y="5" width="2" height="6" fill="#e4a80a"/>
<rect x="22.5" y="13" width="1.5" height="11" fill="#e0a000"/>
</svg>
</body></html>
